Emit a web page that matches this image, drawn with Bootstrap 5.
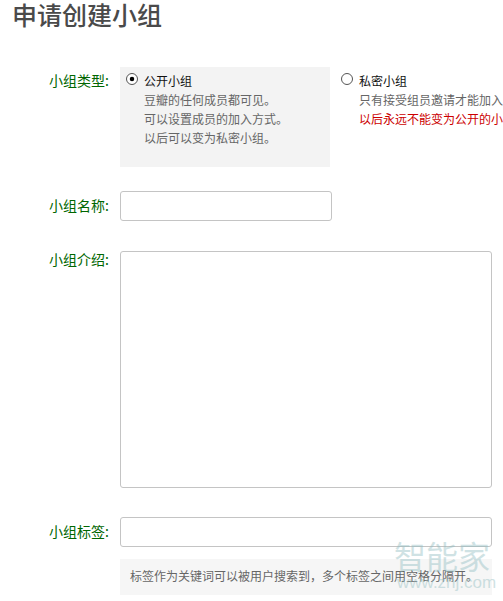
<!DOCTYPE html>
<html lang="zh">
<head>
<meta charset="utf-8">
<title>申请创建小组</title>
<link href="https://cdn.jsdelivr.net/npm/bootstrap@5.3.0/dist/css/bootstrap.min.css" rel="stylesheet">
<style>
html,body{height:601px;overflow:hidden}
body{background:#fff;font-family:"Liberation Sans","Noto Sans CJK SC",sans-serif;font-size:12px;color:#666;position:relative}
.page-wrap{width:503px;overflow:hidden}
.page-title{font-family:"Noto Sans CJK SC",sans-serif;font-size:25px;line-height:36px;font-weight:500;color:#4a4a4a;margin:-4px 0 0;padding-left:12px}
.form-stack{margin-top:35px}
.label-cell{width:110px;flex:none;padding-right:1px;text-align:right;font-size:14px;color:#060;font-family:"Noto Sans CJK SC",sans-serif;font-weight:400}
.field-cell{margin-left:10px;flex:none}
.type-row{height:100px}
.type-row .label-cell{padding-top:3px;line-height:21px}
.opt-box{width:210px;height:100px;padding:4px 0 0 6px;flex:none;display:flex;gap:6px}
.opt-on{background:#f3f3f3}
.opt-off{padding-left:11px;width:300px}
.opt-radio.form-check-input{width:12px;height:12px;margin:2px 0 0;flex:none;border:1px solid #555;background-color:#fff;box-shadow:none}
.opt-radio.form-check-input:checked{background-color:#fff;border-color:#555;background-image:url("data:image/svg+xml,%3csvg xmlns='http://www.w3.org/2000/svg' viewBox='-4 -4 8 8'%3e%3ccircle r='1.8' fill='%23000'/%3e%3c/svg%3e")}
.opt-text{line-height:19px;font-size:12px;white-space:nowrap;font-family:"Noto Sans CJK SC",sans-serif;font-weight:400;color:#666}
.opt-name{color:#111}
.opt-warn{color:#c00}
.name-row{margin-top:24px;align-items:center}
.name-row .label-cell,.tags-row .label-cell{padding-bottom:2px}
.intro-row{margin-top:30px}
.intro-row .label-cell{line-height:16px}
.tags-row{margin-top:29px;align-items:center}
.plain-input.form-control{height:30px;border:1px solid #c4c4c4;border-radius:3px;padding:0 6px;box-shadow:none;background:#fff}
.w-short{width:212px}
.w-long{width:372px}
.plain-area.form-control{height:237px;min-height:0;border:1px solid #c4c4c4;border-radius:3px;resize:none;box-shadow:none}
.hint-box{margin:12px 0 0 120px;width:372px;height:36px;line-height:34px;padding-left:10px;background:#f6f6f6;color:#666;font-size:12px;font-weight:400;white-space:nowrap;font-family:"Noto Sans CJK SC",sans-serif}
.watermark{position:absolute;left:394px;top:536px;width:109px;color:#8fbcc0;opacity:.42;pointer-events:none;font-family:"Noto Sans CJK SC",sans-serif;text-align:left}
.watermark-big{font-size:32px;line-height:38px;font-weight:400;white-space:nowrap}
.watermark-small{font-family:"Liberation Sans",sans-serif;font-size:17px;line-height:18px;margin-left:3px;white-space:nowrap}
</style>
</head>
<body>
<div class="page-wrap">
  <h1 class="page-title">申请创建小组</h1>
  <form class="form-stack">
    <div class="d-flex type-row">
      <div class="label-cell">小组类型:</div>
      <div class="field-cell d-flex">
        <label class="opt-box opt-on">
          <input class="form-check-input opt-radio" type="radio" name="grouptype" checked>
          <span class="opt-text d-block"><span class="opt-name">公开小组</span><br>豆瓣的任何成员都可见。<br>可以设置成员的加入方式。<br>以后可以变为私密小组。</span>
        </label>
        <label class="opt-box opt-off">
          <input class="form-check-input opt-radio" type="radio" name="grouptype">
          <span class="opt-text d-block"><span class="opt-name">私密小组</span><br>只有接受组员邀请才能加入小组。<br><span class="opt-warn">以后永远不能变为公开的小组。</span></span>
        </label>
      </div>
    </div>
    <div class="d-flex name-row">
      <div class="label-cell">小组名称:</div>
      <div class="field-cell"><input type="text" class="form-control plain-input w-short"></div>
    </div>
    <div class="d-flex intro-row">
      <div class="label-cell">小组介绍:</div>
      <div class="field-cell"><textarea class="form-control plain-area w-long d-block"></textarea></div>
    </div>
    <div class="d-flex tags-row">
      <div class="label-cell">小组标签:</div>
      <div class="field-cell"><input type="text" class="form-control plain-input w-long"></div>
    </div>
    <div class="hint-box">标签作为关键词可以被用户搜索到，多个标签之间用空格分隔开。</div>
  </form>
</div>
<div class="watermark">
  <div class="watermark-big">智能家</div>
  <div class="watermark-small">www.znj.com</div>
</div>
<script src="https://cdn.jsdelivr.net/npm/bootstrap@5.3.0/dist/js/bootstrap.bundle.min.js"></script>
</body>
</html>
